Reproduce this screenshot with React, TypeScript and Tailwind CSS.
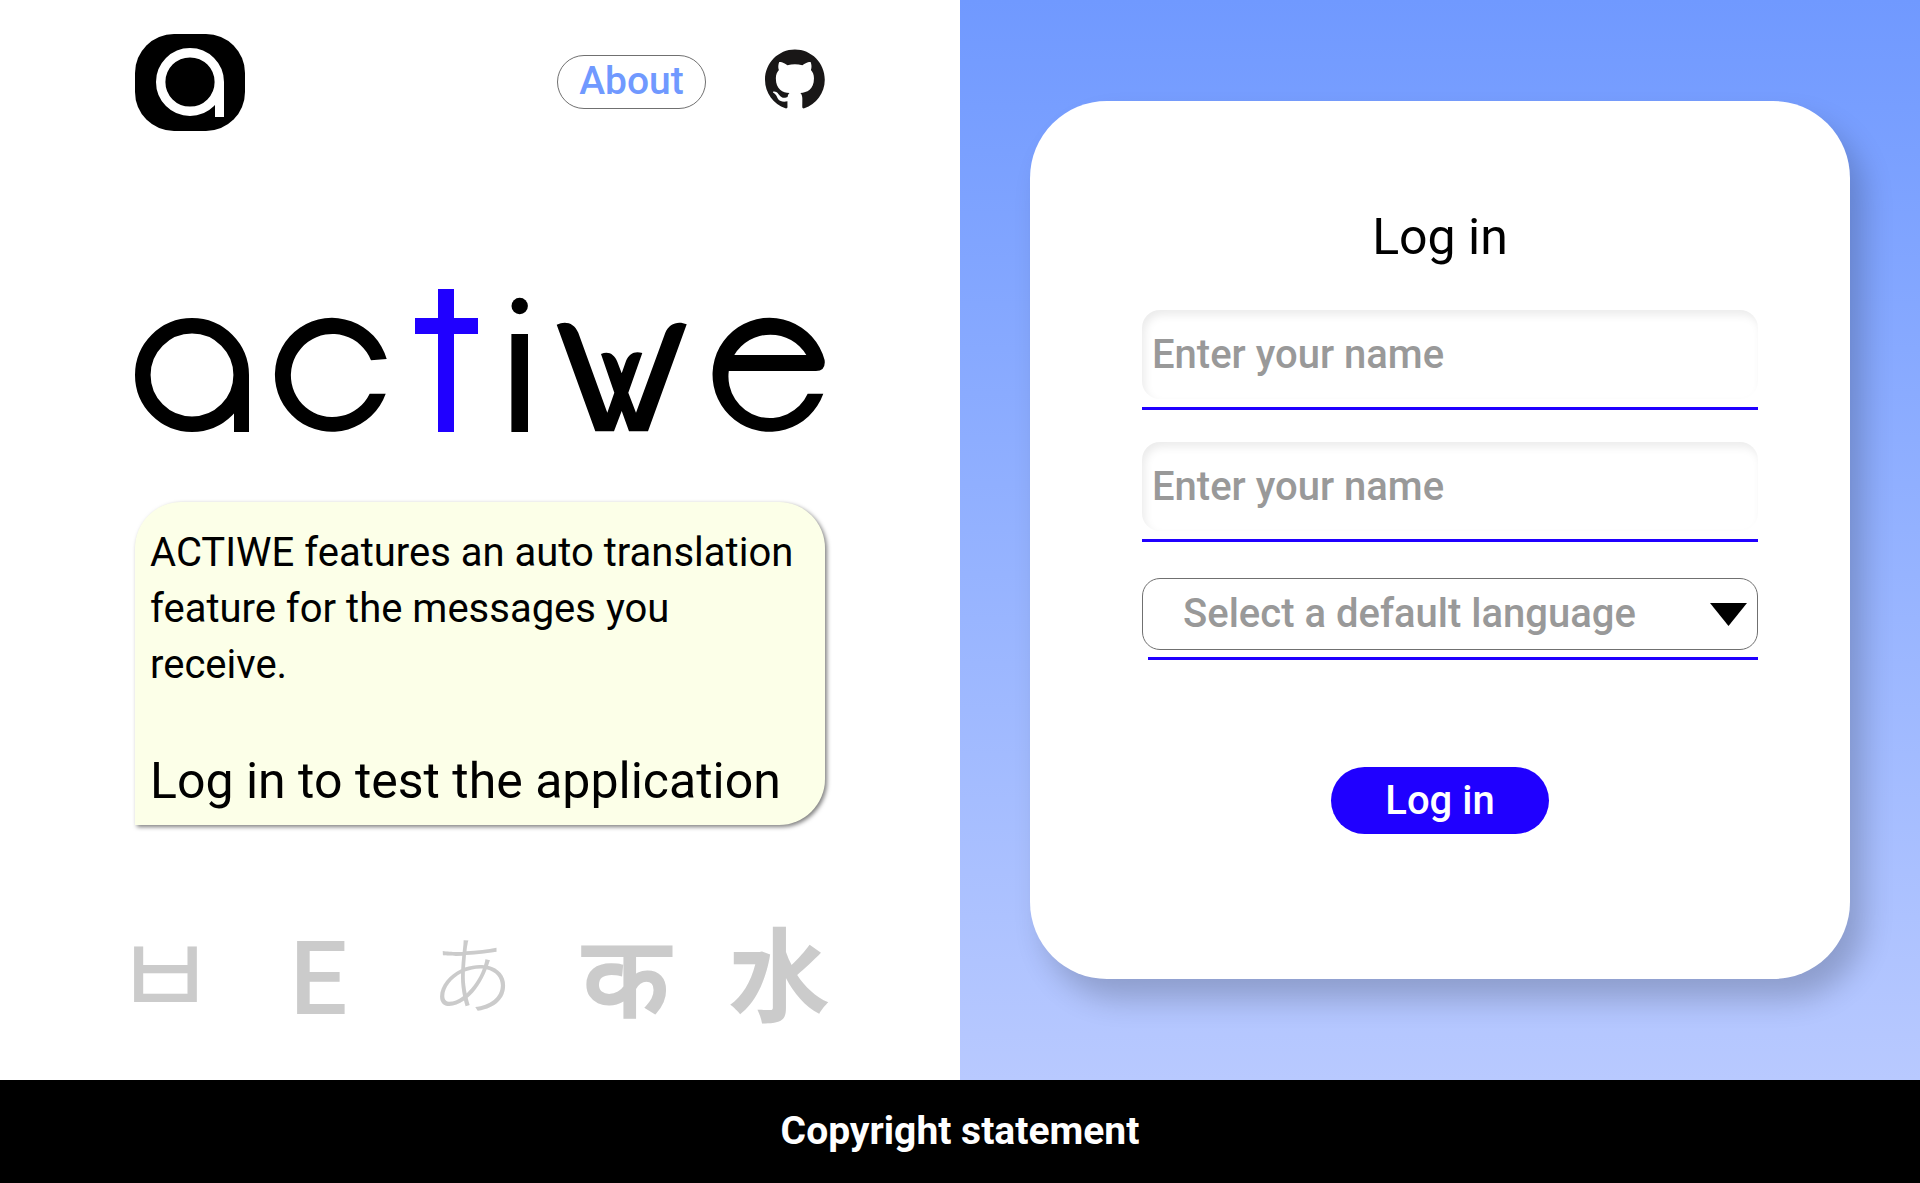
import { useState } from "react";

function Badge() {
  return (
    <svg className="h-[97px] w-[110px]" viewBox="0 0 110 97" role="img" aria-label="actiwe badge">
      <rect width="110" height="97" rx="39" fill="#000" />
      <circle cx="55" cy="48" r="29.3" fill="none" stroke="#fff" strokeWidth="9.4" />
      <rect x="80" y="48" width="9" height="35" fill="#fff" />
    </svg>
  );
}

function GithubMark() {
  return (
    <svg className="size-[60px]" viewBox="0 0 98 96" fill="#191717" aria-hidden="true">
      <path
        fillRule="evenodd"
        clipRule="evenodd"
        d="M48.854 0C21.839 0 0 22 0 49.217c0 21.756 13.993 40.172 33.405 46.69 2.427.49 3.316-1.059 3.316-2.362 0-1.141-.08-5.052-.08-9.127-13.59 2.934-16.42-5.867-16.42-5.867-2.184-5.704-5.42-7.17-5.42-7.17-4.448-3.015.324-3.015.324-3.015 4.934.326 7.523 5.052 7.523 5.052 4.367 7.496 11.404 5.378 14.235 4.074.404-3.178 1.699-5.378 3.074-6.6-10.839-1.141-22.243-5.378-22.243-24.283 0-5.378 1.94-9.778 5.014-13.2-.485-1.222-2.184-6.275.486-13.038 0 0 4.125-1.304 13.426 5.052a46.97 46.97 0 0 1 12.214-1.63c4.125 0 8.33.571 12.213 1.63 9.302-6.356 13.427-5.052 13.427-5.052 2.67 6.763.97 11.816.485 13.038 3.155 3.422 5.015 7.822 5.015 13.2 0 18.905-11.404 23.06-22.324 24.283 1.78 1.548 3.316 4.481 3.316 9.126 0 6.6-.08 11.897-.08 13.526 0 1.304.89 2.853 3.316 2.364 19.412-6.52 33.405-24.935 33.405-46.691C97.707 22 75.788 0 48.854 0z"
      />
    </svg>
  );
}

function Wordmark() {
  return (
    <svg className="block w-full" viewBox="0 0 690 143" role="img" aria-label="actiwe">
      <circle cx="57" cy="86" r="49.2" fill="none" stroke="#000" strokeWidth="15.6" />
      <rect x="99" y="86" width="15" height="57" />
      <path d="M251.7 70A57 57 0 1 0 250.7 104.7H234.7A41.5 41.5 0 1 1 236 71.3Z" />
      <path fill="#2000ff" d="M303 0h16v29h24v16h-24v98h-16V45h-23V29h23z" />
      <circle cx="384.7" cy="17" r="8.2" />
      <rect x="376.4" y="45" width="16.6" height="98" />
      <path d="M421.7 35.7C430 31.500 439 33.500 443.300 43.700L472.300 123.700L479.300 103.700L466 65C473 61.500 479.500 65 482.300 72.700L486.700 84.300L491 72C494 64.500 500 61.500 507.300 64L493.300 103.700L501 123.700L530.300 43.700C534 34.500 543 31.500 551.700 35.300L513 142.300H494L486.700 122L479 142.300H460.300Z" />
      <path
        fillRule="evenodd"
        d="M688.300 104.700A57 57 0 1 1 689.600 71Q691 82 681 82H593.800A41.500 41.500 0 0 0 672.700 104.700ZM599.300 66H671.300A42 42 0 0 0 599.300 66Z"
      />
    </svg>
  );
}

function NameField({ id, label }: { id: string; label: string }) {
  return (
    <div className="border-b-[3px] border-[#2000ff] pb-[8px]">
      <input
        id={id}
        type="text"
        aria-label={label}
        placeholder="Enter your name"
        className="block h-[89px] w-full rounded-[18px] bg-white px-[10px] text-[40px] font-medium text-black shadow-[inset_3px_5px_9px_rgba(0,0,0,0.08)] outline-none placeholder:text-[#999]"
      />
    </div>
  );
}

const scripts = [
  { char: "ㅂ", lang: "ko", style: "text-[112px] font-normal" },
  { char: "E", lang: "en", style: "text-[102px] font-medium" },
  { char: "あ", lang: "ja", style: "text-[84px] font-light" },
  { char: "क", lang: "hi", style: "text-[112px] font-bold" },
  { char: "水", lang: "zh", style: "text-[102px] font-bold" },
];

export default function App() {
  const [language, setLanguage] = useState("");

  return (
    <div className="flex min-h-screen flex-col bg-white font-['Roboto','Noto_Sans_CJK_JP',sans-serif] text-black">
      <main className="grid flex-1 grid-cols-2">
        <section className="flex flex-col px-[135px] pt-[34px]">
          <header className="flex items-start justify-between">
            <Badge />
            <nav className="flex items-start gap-[59px] pt-[15px]">
              <a
                href="#about"
                className="mt-[6px] flex h-[54px] w-[149px] items-center justify-center rounded-full border border-[#707070] pb-[2px] text-[39px] font-medium text-[#7099ff]"
              >
                About
              </a>
              <a href="#github" aria-label="GitHub">
                <GithubMark />
              </a>
            </nav>
          </header>

          <div className="mt-[158px]">
            <Wordmark />
          </div>

          <div className="mt-[70px] rounded-[46px] rounded-bl-none bg-[#fcffe8] px-[15px] pt-[23px] pb-[9px] shadow-[2px_2px_4px_rgba(0,0,0,0.5)]">
            <p className="text-[40px] leading-[56px]">
              ACTIWE features an auto translation feature for the messages you receive.
            </p>
            <p className="mt-[53px] text-[50px] leading-[70px] whitespace-nowrap">Log in to test the application</p>
          </div>

          <ul className="mt-[104px] mr-[16px] flex h-[100px] items-center justify-between text-[#cbcbcb]">
            {scripts.map((s) => (
              <li key={s.lang} lang={s.lang} className={`flex w-[60px] justify-center leading-none ${s.style}`}>
                {s.char}
              </li>
            ))}
          </ul>
        </section>

        <section className="bg-linear-to-b from-[#7099ff] to-[#b8c9ff] px-[70px] pt-[101px] pb-[101px]">
          <form
            className="flex h-full flex-col rounded-[77px] bg-white pt-[101px] pr-[92px] pl-[112px] shadow-[14px_20px_30px_rgba(0,0,0,0.2)]"
            onSubmit={(e) => e.preventDefault()}
          >
            <h1 className="mr-[20px] text-center text-[50px] leading-[70px]">Log in</h1>
            <div className="mt-[38px] flex flex-col gap-[32px]">
              <NameField id="name" label="Name" />
              <NameField id="display-name" label="Display name" />
            </div>
            <div className="relative mt-[36px]">
              <select
                id="language"
                aria-label="Default language"
                value={language}
                onChange={(e) => setLanguage(e.target.value)}
                className="block h-[72px] w-full appearance-none rounded-[18px] border border-[#707070] bg-white pr-[60px] pl-[40px] text-[40px] font-medium text-[#999] outline-none"
              >
                <option value="">Select a default language</option>
                <option value="en">English</option>
                <option value="ja">日本語</option>
              </select>
              <svg
                className="pointer-events-none absolute top-[25px] right-[11px] h-[23px] w-[37px]"
                viewBox="0 0 37 23"
                aria-hidden="true"
              >
                <path d="M0 0h37L18.500 23z" />
              </svg>
            </div>
            <div className="mt-[7px] ml-[6px] h-[3px] bg-[#2000ff]" />
            <button
              type="submit"
              className="mt-[107px] mr-[20px] h-[67px] w-[218px] self-center rounded-full bg-[#2000ff] text-[40px] font-medium text-white"
            >
              Log in
            </button>
          </form>
        </section>
      </main>

      <footer className="flex h-[103px] items-center justify-center bg-black text-[39px] font-bold text-white">
        Copyright statement
      </footer>
    </div>
  );
}
